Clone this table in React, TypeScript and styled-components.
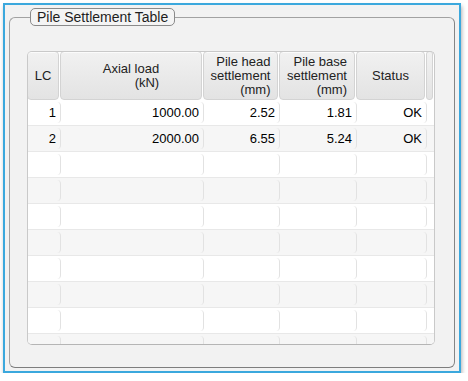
import { createGlobalStyle, styled } from "styled-components";

const COLUMNS = "33px 143px 76px 77px 70px 1fr";

type Align = "left" | "center" | "right";

const headers: { lines: string[]; align: Align }[] = [
  { lines: ["LC"], align: "center" },
  { lines: ["Axial load", "(kN)"], align: "right" },
  { lines: ["Pile head", "settlement", "(mm)"], align: "right" },
  { lines: ["Pile base", "settlement", "(mm)"], align: "right" },
  { lines: ["Status"], align: "center" },
];

const data: string[][] = [
  ["1", "1000.00", "2.52", "1.81", "OK"],
  ["2", "2000.00", "6.55", "5.24", "OK"],
];

const rows: string[][] = [
  ...data,
  ...Array.from({ length: 8 }, () => ["", "", "", "", ""]),
];

const App = () => {
  return (
    <>
      <GlobalStyle />
      <Window>
        <GroupBox>
          <GroupTitle>Pile Settlement Table</GroupTitle>
          <Table>
            <HeaderRow>
              {headers.map((h, i) => (
                <HeaderCell key={i}>
                  <HeaderText align={h.align}>
                    {h.lines.map((line, j) => (
                      <div key={j}>{line}</div>
                    ))}
                  </HeaderText>
                </HeaderCell>
              ))}
              <HeaderFiller />
            </HeaderRow>
            {rows.map((row, i) => (
              <BodyRow key={i} odd={i % 2 === 1}>
                {row.map((value, j) => (
                  <BodyCell key={j}>{value}</BodyCell>
                ))}
                <span />
              </BodyRow>
            ))}
          </Table>
        </GroupBox>
      </Window>
    </>
  );
};

export default App;

const GlobalStyle = createGlobalStyle`
  body {
    margin: 0;
    background: #ffffff;
    font-family: "Liberation Sans", Arial, sans-serif;
  }
`;

const Window = styled.div`
  box-sizing: border-box;
  width: 458px;
  height: 370px;
  margin: 3px 0 0 3px;
  padding: 12px 4px 3px 4px;

  border: 2px solid #3ba8dd;
  background-color: #f2f2f2;
  box-shadow: 1px 3px 4px rgba(0, 0, 0, 0.3);
`;

const GroupBox = styled.div`
  position: relative;
  box-sizing: border-box;
  height: 100%;
  padding: 33px 19px 22px 17px;

  border: 1px solid #a2a2a2;
  border-right-color: #858585;
  border-bottom-color: #7e7e7e;
  border-radius: 6px;
`;

const GroupTitle = styled.div`
  position: absolute;
  top: -10px;
  left: 20px;
  box-sizing: border-box;
  display: flex;
  align-items: center;
  height: 18px;
  padding: 0 6px;

  border: 1px solid #8a8a8a;
  border-radius: 5px;
  background-color: #f4f4f4;
  color: #1e1e1e;
  font-size: 14px;
  white-space: nowrap;
`;

const Table = styled.div`
  display: flex;
  flex-direction: column;
  box-sizing: border-box;
  height: 100%;
  overflow: hidden;

  border: 1px solid #c9c9c9;
  border-bottom-color: #b5b5b5;
  border-radius: 5px;
  background-color: #ffffff;
`;

const HeaderRow = styled.div`
  display: grid;
  grid-template-columns: ${COLUMNS};
  flex: 0 0 49px;
  margin-top: -1px;
  margin-left: -1px;
`;

const HeaderCell = styled.div`
  display: flex;
  align-items: center;
  justify-content: center;
  box-sizing: border-box;
  margin-right: 1px;
  padding: 0 3px;

  border: 1px solid #d3d3d3;
  border-radius: 4px;
  background: linear-gradient(#f1f1f1, #e3e3e3);
  box-shadow: inset 0 1px 0 rgba(255, 255, 255, 0.7);
  color: #222222;
  font-size: 13px;
  line-height: 14px;
  overflow: hidden;
`;

const HeaderFiller = styled.div`
  box-sizing: border-box;
  margin-right: 1px;
  border: 1px solid #d3d3d3;
  border-radius: 3px;
  background: linear-gradient(#f1f1f1, #e3e3e3);
`;

const HeaderText = styled.div<{ align: Align }>`
  text-align: ${({ align }) => align};
  white-space: nowrap;
`;

const BodyRow = styled.div<{ odd: boolean }>`
  display: grid;
  grid-template-columns: ${COLUMNS};
  flex: 0 0 26px;
  box-sizing: border-box;

  border-bottom: 1px solid #e8e8e8;
  background-color: ${({ odd }) => (odd ? "#f6f6f6" : "#ffffff")};
`;

const BodyCell = styled.div`
  display: flex;
  align-items: center;
  justify-content: flex-end;
  margin: 2px 0;
  padding-right: 4px;

  border-right: 1px solid #e2e2e2;
  border-radius: 0 4px 4px 0;
  color: #000000;
  font-size: 13px;
`;
